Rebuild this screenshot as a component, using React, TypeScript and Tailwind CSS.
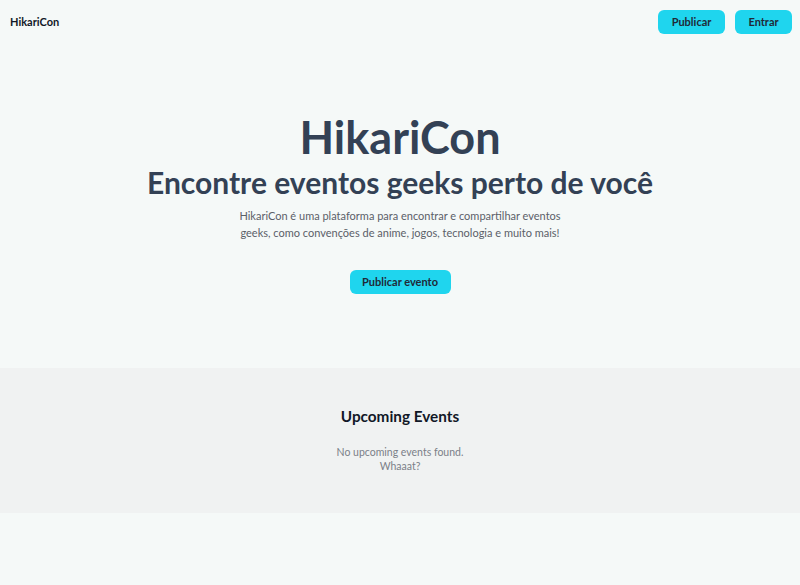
import React from "react";

export default function App() {
  return (
    <div className="min-h-[585px] bg-[#f5f9f8] text-[#334155]" style={{ fontFamily: "Lato, 'Noto Sans', sans-serif" }}>
      <header className="h-11 flex items-center justify-between pl-[10px] pr-2">
        <div className="text-[11px] font-bold text-[#111827]">HikariCon</div>
        <div className="flex gap-[10px]">
          <button className="h-6 w-[67px] rounded-md bg-[#1fd5ee] text-[11px] font-bold text-[#1f2937]">Publicar</button>
          <button className="h-6 w-[57px] rounded-md bg-[#1fd5ee] text-[11px] font-bold text-[#1f2937]">Entrar</button>
        </div>
      </header>
      <section className="flex flex-col items-center pt-[70px] pb-[74px]">
        <h1 className="text-[45px] leading-[46px] font-bold text-[#334155]">HikariCon</h1>
        <h2 className="mt-[6px] text-[30px] leading-[32px] font-bold text-[#334155]">Encontre eventos geeks perto de você</h2>
        <p className="mt-[9px] w-[340px] text-center text-[11px] leading-[17px] text-[#5b6068]">
          HikariCon é uma plataforma para encontrar e compartilhar eventos geeks, como convenções de anime, jogos, tecnologia e muito mais!
        </p>
        <button className="mt-[29px] h-6 w-[101px] rounded-md bg-[#1fd5ee] text-[11px] font-bold text-[#1f2937]">Publicar evento</button>
      </section>
      <section className="bg-[#f0f2f2] flex flex-col items-center pt-[38px] pb-[40px]">
        <h3 className="text-[15.3px] leading-[20px] font-bold text-[#111827]">Upcoming Events</h3>
        <div className="mt-[19px] text-center text-[10.5px] leading-[14px] text-[#7b8088]">
          <p>No upcoming events found.</p>
          <p>Whaaat?</p>
        </div>
      </section>
    </div>
  );
}
